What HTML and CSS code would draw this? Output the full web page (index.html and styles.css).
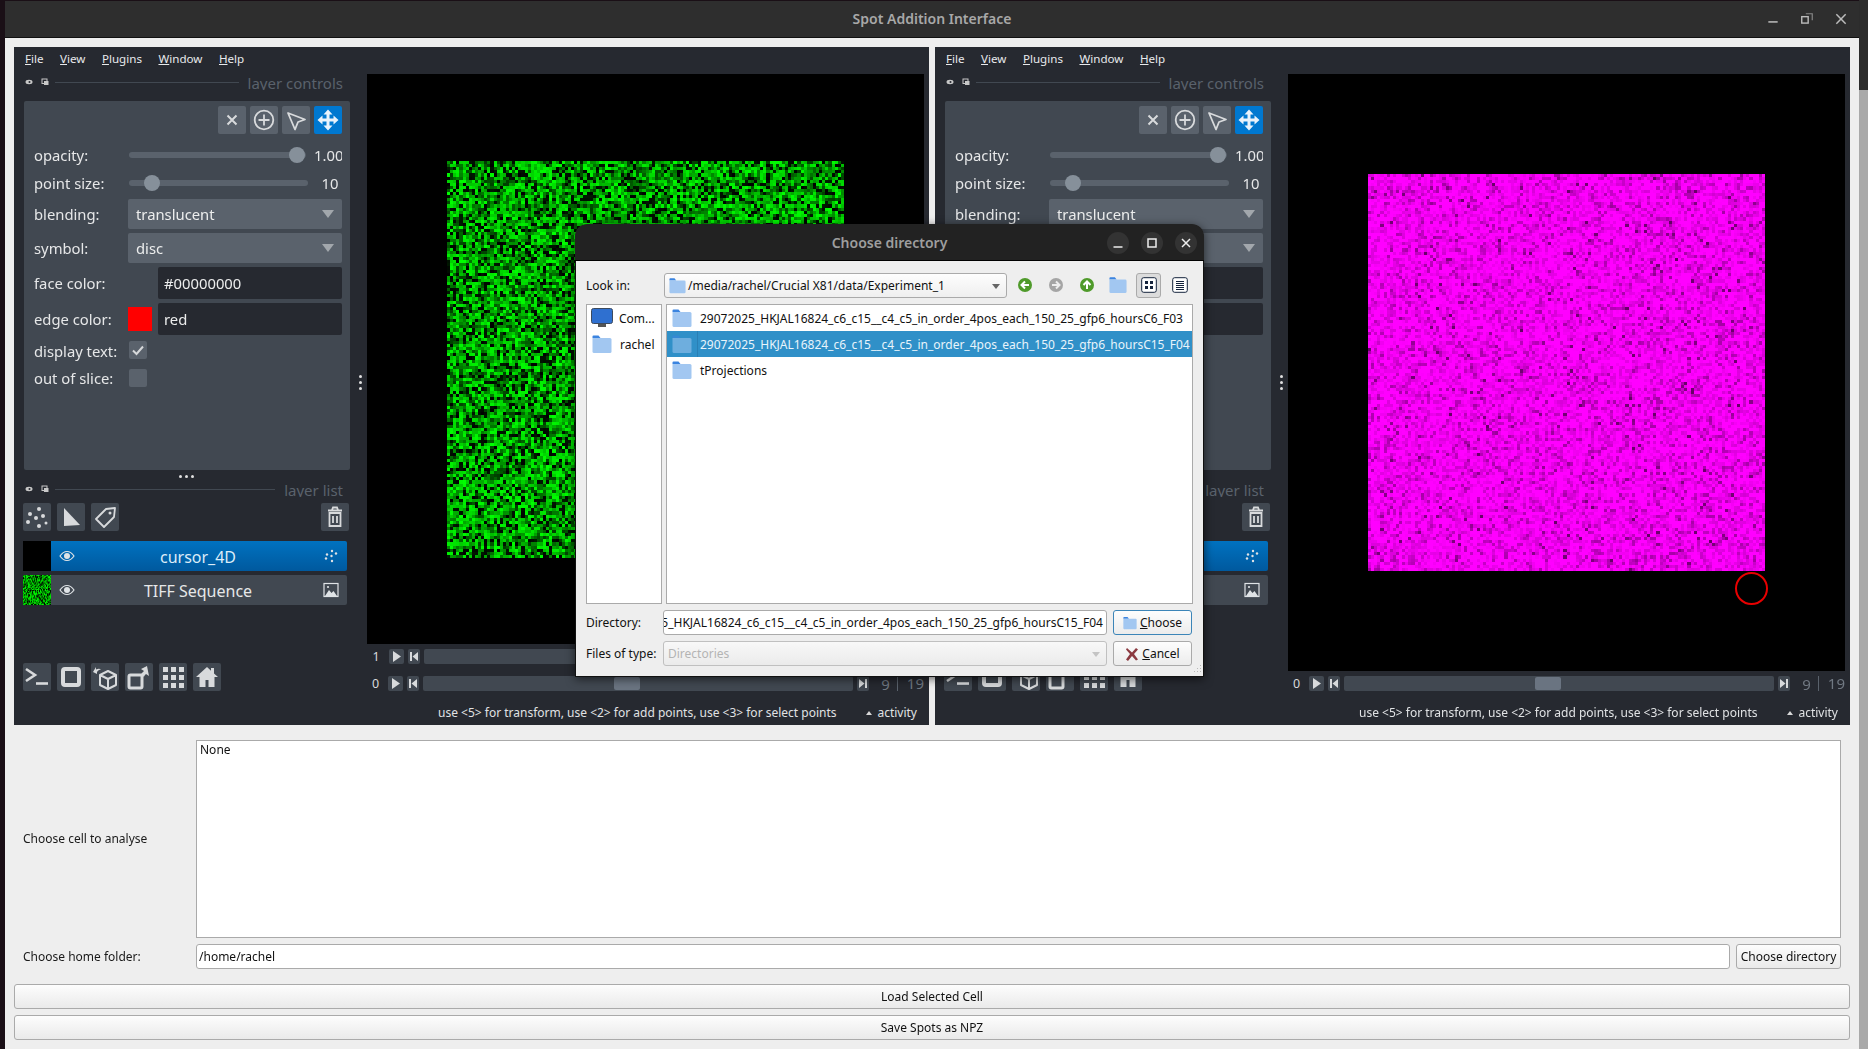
FILE: index.html
```html
<!DOCTYPE html>
<html lang="en">
<head>
<meta charset="utf-8">
<title>Spot Addition Interface</title>
<link rel="stylesheet" href="styles.css">
</head>
<body>
<svg class="sprite" width="0" height="0" aria-hidden="true">
  <symbol id="i-x" viewBox="0 0 28 28"><path d="M9.5 9.5l9 9M18.500 9.500l-9 9" fill="none" stroke="currentColor" stroke-width="2"/></symbol>
  <symbol id="i-add" viewBox="0 0 28 28"><circle cx="14" cy="14" r="9.300" fill="none" stroke="currentColor" stroke-width="1.800"/><path d="M14 8.500v11M8.500 14h11" stroke="currentColor" stroke-width="1.800"/></symbol>
  <symbol id="i-select" viewBox="0 0 28 28"><path d="M6 7l17 6.500-7 2.500-3 7.500z" fill="none" stroke="currentColor" stroke-width="1.800" stroke-linejoin="round"/></symbol>
  <symbol id="i-move" viewBox="0 0 28 28"><path d="M14 3.500l4.500 5h-3v4h4v-3l5 4.500-5 4.500v-3h-4v4h3l-4.500 5-4.500-5h3v-4h-4v3l-5-4.500 5-4.500v3h4v-4h-3z" fill="currentColor"/></symbol>
  <symbol id="i-points" viewBox="0 0 28 28"><g fill="currentColor"><circle cx="16" cy="6" r="2"/><circle cx="7" cy="11" r="2"/><circle cx="20" cy="13" r="2"/><circle cx="13" cy="15" r="2"/><circle cx="5" cy="19" r="2"/><circle cx="16" cy="23" r="2"/><circle cx="23" cy="20" r="1.500"/></g></symbol>
  <symbol id="i-shape" viewBox="0 0 28 28"><path d="M7 5l16 17-16 1z" fill="currentColor"/></symbol>
  <symbol id="i-label" viewBox="0 0 28 28"><path d="M5 16L15 6l9-1-1 9-10 10z" fill="none" stroke="currentColor" stroke-width="1.800" stroke-linejoin="round"/><circle cx="19" cy="10" r="1.500" fill="currentColor"/></symbol>
  <symbol id="i-trash" viewBox="0 0 28 28"><path d="M7 7.500h14M11 7l1-2.500h4L17 7M8.500 10h11v13h-11zM12 13v7M16 13v7" fill="none" stroke="currentColor" stroke-width="1.800"/></symbol>
  <symbol id="i-console" viewBox="0 0 28 28"><path d="M3 6l9 6-9 6" fill="none" stroke="currentColor" stroke-width="2.600"/><path d="M13 20.500h12" stroke="currentColor" stroke-width="2.600"/></symbol>
  <symbol id="i-square" viewBox="0 0 28 28"><rect x="6" y="6" width="16" height="16" rx="2" fill="none" stroke="currentColor" stroke-width="4"/></symbol>
  <symbol id="i-cube" viewBox="0 0 28 28"><path d="M9 12l8-4 8 4v10l-8 4-8-4zM9 12l8 4 8-4M17 16v10" fill="none" stroke="currentColor" stroke-width="2" stroke-linejoin="round"/><path d="M2 9l3-5v2.500c2-1 4-1 5 0-2 0-3 1-4 2.500v2z" fill="currentColor"/></symbol>
  <symbol id="i-roll" viewBox="0 0 28 28"><rect x="4" y="12" width="13" height="13" rx="1.500" fill="none" stroke="currentColor" stroke-width="3"/><path d="M22 3l2 10-3-2c-1 1-2 2-2 3l-3-3c1-1 2-2 3-3l-3-2z" fill="currentColor"/></symbol>
  <symbol id="i-grid" viewBox="0 0 28 28"><g fill="currentColor"><rect x="4" y="4" width="5" height="5"/><rect x="12" y="4" width="5" height="5"/><rect x="20" y="4" width="5" height="5"/><rect x="4" y="12" width="5" height="5"/><rect x="12" y="12" width="5" height="5"/><rect x="20" y="12" width="5" height="5"/><rect x="4" y="20" width="5" height="5"/><rect x="12" y="20" width="5" height="5"/><rect x="20" y="20" width="5" height="5"/></g></symbol>
  <symbol id="i-home" viewBox="0 0 28 28"><path d="M14 4L3 14h3.500v10h6v-7h3v7h6V14H25l-4-3.600V5h-3v2.700z" fill="currentColor"/></symbol>
  <symbol id="i-eye" viewBox="0 0 16 16"><path d="M1 8c2-3 4.500-4.500 7-4.500S13 5 15 8c-2 3-4.500 4.500-7 4.500S3 11 1 8z" fill="none" stroke="currentColor" stroke-width="1.200"/><circle cx="8" cy="8" r="3" fill="currentColor"/></symbol>
  <symbol id="i-image" viewBox="0 0 16 16"><rect x="1" y="1.500" width="14" height="13" fill="none" stroke="currentColor" stroke-width="1.200"/><path d="M2 14l4-6 2.500 3 2-2 3.500 5z" fill="currentColor"/><circle cx="5" cy="5" r="1.100" fill="currentColor"/></symbol>
  <symbol id="i-pts-sm" viewBox="0 0 16 16"><g fill="currentColor"><circle cx="9" cy="3" r="1.200"/><circle cx="13" cy="5.500" r="1.200"/><circle cx="4" cy="6.500" r="1.200"/><circle cx="8.500" cy="8" r="1.200"/><circle cx="3" cy="10.500" r="1.200"/><circle cx="9" cy="13" r="1.200"/></g></symbol>
  <symbol id="i-folder" viewBox="0 0 20 20"><path d="M0.500 2.500a1 1 0 0 1 1-1h5l2 2.500H0.500z" fill="#3b84e0"/><path d="M0.500 4h17.500a1.500 1.500 0 0 1 1.500 1.500v12a1.500 1.500 0 0 1-1.500 1.500H2a1.500 1.500 0 0 1-1.500-1.500z" fill="#a2c7f1"/></symbol>
  <symbol id="i-float" viewBox="0 0 8 8"><rect x="1" y="1" width="5" height="4.500" fill="none" stroke="currentColor"/><rect x="3" y="3" width="4.500" height="4" fill="currentColor"/></symbol>
  <symbol id="i-close" viewBox="0 0 8 8"><ellipse cx="4" cy="4" rx="3.500" ry="2.200" fill="currentColor"/><circle cx="4.500" cy="4" r="1" fill="#262930"/></symbol>
  <symbol id="i-play" viewBox="0 0 15 15"><path d="M4 2l8 5.500-8 5.500z" fill="currentColor"/></symbol>
  <symbol id="i-start" viewBox="0 0 12 15"><path d="M2 3h2v9H2zM10 3v9L4.500 7.500z" fill="currentColor"/></symbol>
  <symbol id="i-end" viewBox="0 0 12 15"><path d="M8 3h2v9H8zM2 3v9l5.500-4.500z" fill="currentColor"/></symbol>
</svg>

<div class="edge-left"></div>
<div class="window">
  <header class="titlebar">
    <span class="win-title">Spot Addition Interface</span>
    <span class="win-btns">
      <svg class="wb" viewBox="0 0 12 12"><path d="M2 8.500h8" stroke="#bbb" stroke-width="1.300"/></svg>
      <svg class="wb" viewBox="0 0 12 12"><rect x="1.500" y="4" width="5.500" height="5.500" fill="none" stroke="#bbb" stroke-width="1.200"/><path d="M5 1.500h5.500V7" fill="none" stroke="#888"/></svg>
      <svg class="wb" viewBox="0 0 12 12"><path d="M2 2l8 8M10 2l-8 8" stroke="#bbb" stroke-width="1.300"/></svg>
    </span>
  </header>

  <main class="content">
    <div class="viewers">
      <section class="napari">
        <nav class="menubar"><span><u>F</u>ile</span><span><u>V</u>iew</span><span><u>P</u>lugins</span><span><u>W</u>indow</span><span><u>H</u>elp</span></nav>
        <div class="nbody">
          <aside class="side">
            <div class="dock-title"><svg class="dk"><use href="#i-close"/></svg><svg class="dk"><use href="#i-float"/></svg><i class="dk-line"></i><span>layer controls</span></div>
            <div class="controls">
              <div class="tools">
                <button class="tb"><svg><use href="#i-x"/></svg></button>
                <button class="tb"><svg><use href="#i-add"/></svg></button>
                <button class="tb"><svg><use href="#i-select"/></svg></button>
                <button class="tb on"><svg><use href="#i-move"/></svg></button>
              </div>
              <div class="cr r-op"><label>opacity:</label><div class="slider"><b class="knob k-full"></b></div><em class="val v-op">1.00</em></div>
              <div class="cr r-pt"><label>point size:</label><div class="slider"><b class="knob k-pt"></b></div><em class="val">10</em></div>
              <div class="cr r-bl"><label>blending:</label><div class="combo">translucent<i class="arrow"></i></div></div>
              <div class="cr r-sy"><label>symbol:</label><div class="combo">disc<i class="arrow"></i></div></div>
              <div class="cr r-fc"><label>face color:</label><div class="swatch none"></div><div class="coloredit">#00000000</div></div>
              <div class="cr r-ec"><label>edge color:</label><div class="swatch"></div><div class="coloredit">red</div></div>
              <div class="cr r-dt"><label>display text:</label><div class="check"><svg viewBox="0 0 18 18"><path d="M4 9.500l3.500 3.500L14 5.500" fill="none" stroke="#d6d8da" stroke-width="2"/></svg></div></div>
              <div class="cr r-os"><label>out of slice:</label><div class="check"></div></div>
            </div>
            <div class="split-dots"><i></i><i></i><i></i></div>
            <div class="dock-title list-title"><svg class="dk"><use href="#i-close"/></svg><svg class="dk"><use href="#i-float"/></svg><i class="dk-line"></i><span>layer list</span></div>
            <div class="layer-tools">
              <button class="tb"><svg><use href="#i-points"/></svg></button>
              <button class="tb"><svg><use href="#i-shape"/></svg></button>
              <button class="tb"><svg><use href="#i-label"/></svg></button>
              <button class="tb trash"><svg><use href="#i-trash"/></svg></button>
            </div>
            <div class="layer sel"><span class="thumb"></span><span class="lbar"><svg class="eye"><use href="#i-eye"/></svg><span class="lname">cursor_4D</span><svg class="ltype"><use href="#i-pts-sm"/></svg></span></div>
            <div class="layer"><canvas class="thumb noise" data-kind="green" data-seed="7" width="28" height="28"></canvas><span class="lbar"><svg class="eye"><use href="#i-eye"/></svg><span class="lname">TIFF Sequence</span><svg class="ltype"><use href="#i-image"/></svg></span></div>
            <div class="viewer-btns">
              <button class="tb"><svg><use href="#i-console"/></svg></button>
              <button class="tb"><svg><use href="#i-square"/></svg></button>
              <button class="tb"><svg><use href="#i-cube"/></svg></button>
              <button class="tb"><svg><use href="#i-roll"/></svg></button>
              <button class="tb"><svg><use href="#i-grid"/></svg></button>
              <button class="tb"><svg><use href="#i-home"/></svg></button>
            </div>
          </aside>
          <div class="handle"><i></i><i></i><i></i></div>
          <div class="viewer">
            <div class="canvas c-green"><canvas class="noise img" data-kind="green" data-seed="11" width="128" height="128"></canvas></div>
            <div class="dims">
              <div class="dim"><span class="dnum">1</span><span class="db play"><svg><use href="#i-play"/></svg></span><span class="db step"><svg><use href="#i-start"/></svg></span><span class="track"></span></div>
              <div class="dim"><span class="dnum">0</span><span class="db play"><svg><use href="#i-play"/></svg></span><span class="db step"><svg><use href="#i-start"/></svg></span><span class="track"><b></b></span><span class="db step"><svg><use href="#i-end"/></svg></span><span class="dcount">9</span><span class="dtotal">19</span></div>
            </div>
            <div class="status"><span>use &lt;5&gt; for transform, use &lt;2&gt; for add points, use &lt;3&gt; for select points</span><span class="activity"><i></i>activity</span></div>
          </div>
        </div>
      </section>

      <section class="napari">
        <nav class="menubar"><span><u>F</u>ile</span><span><u>V</u>iew</span><span><u>P</u>lugins</span><span><u>W</u>indow</span><span><u>H</u>elp</span></nav>
        <div class="nbody">
          <aside class="side">
            <div class="dock-title"><svg class="dk"><use href="#i-close"/></svg><svg class="dk"><use href="#i-float"/></svg><i class="dk-line"></i><span>layer controls</span></div>
            <div class="controls">
              <div class="tools">
                <button class="tb"><svg><use href="#i-x"/></svg></button>
                <button class="tb"><svg><use href="#i-add"/></svg></button>
                <button class="tb"><svg><use href="#i-select"/></svg></button>
                <button class="tb on"><svg><use href="#i-move"/></svg></button>
              </div>
              <div class="cr r-op"><label>opacity:</label><div class="slider"><b class="knob k-full"></b></div><em class="val v-op">1.00</em></div>
              <div class="cr r-pt"><label>point size:</label><div class="slider"><b class="knob k-pt"></b></div><em class="val">10</em></div>
              <div class="cr r-bl"><label>blending:</label><div class="combo">translucent<i class="arrow"></i></div></div>
              <div class="cr r-sy"><label>symbol:</label><div class="combo">disc<i class="arrow"></i></div></div>
              <div class="cr r-fc"><label>face color:</label><div class="swatch none"></div><div class="coloredit">#00000000</div></div>
              <div class="cr r-ec"><label>edge color:</label><div class="swatch"></div><div class="coloredit">red</div></div>
              <div class="cr r-dt"><label>display text:</label><div class="check"><svg viewBox="0 0 18 18"><path d="M4 9.500l3.500 3.500L14 5.500" fill="none" stroke="#d6d8da" stroke-width="2"/></svg></div></div>
              <div class="cr r-os"><label>out of slice:</label><div class="check"></div></div>
            </div>
            <div class="split-dots"><i></i><i></i><i></i></div>
            <div class="dock-title list-title"><svg class="dk"><use href="#i-close"/></svg><svg class="dk"><use href="#i-float"/></svg><i class="dk-line"></i><span>layer list</span></div>
            <div class="layer-tools">
              <button class="tb"><svg><use href="#i-points"/></svg></button>
              <button class="tb"><svg><use href="#i-shape"/></svg></button>
              <button class="tb"><svg><use href="#i-label"/></svg></button>
              <button class="tb trash"><svg><use href="#i-trash"/></svg></button>
            </div>
            <div class="layer sel"><span class="thumb"></span><span class="lbar"><svg class="eye"><use href="#i-eye"/></svg><span class="lname">cursor_4D</span><svg class="ltype"><use href="#i-pts-sm"/></svg></span></div>
            <div class="layer"><canvas class="thumb noise" data-kind="magenta" data-seed="5" width="28" height="28"></canvas><span class="lbar"><svg class="eye"><use href="#i-eye"/></svg><span class="lname">TIFF Sequence</span><svg class="ltype"><use href="#i-image"/></svg></span></div>
            <div class="viewer-btns">
              <button class="tb"><svg><use href="#i-console"/></svg></button>
              <button class="tb"><svg><use href="#i-square"/></svg></button>
              <button class="tb"><svg><use href="#i-cube"/></svg></button>
              <button class="tb"><svg><use href="#i-roll"/></svg></button>
              <button class="tb"><svg><use href="#i-grid"/></svg></button>
              <button class="tb"><svg><use href="#i-home"/></svg></button>
            </div>
          </aside>
          <div class="handle"><i></i><i></i><i></i></div>
          <div class="viewer">
            <div class="canvas c-mag"><canvas class="noise img" data-kind="magenta" data-seed="23" width="128" height="128"></canvas><i class="spot"></i></div>
            <div class="dims single">
              <div class="dim"><span class="dnum">0</span><span class="db play"><svg><use href="#i-play"/></svg></span><span class="db step"><svg><use href="#i-start"/></svg></span><span class="track"><b></b></span><span class="db step"><svg><use href="#i-end"/></svg></span><span class="dcount">9</span><span class="dtotal">19</span></div>
            </div>
            <div class="status"><span>use &lt;5&gt; for transform, use &lt;2&gt; for add points, use &lt;3&gt; for select points</span><span class="activity"><i></i>activity</span></div>
          </div>
        </div>
      </section>
    </div>

    <form class="form">
      <div class="frow cellrow"><label>Choose cell to analyse</label><div class="textbox">None</div></div>
      <div class="frow homerow"><label>Choose home folder:</label><div class="lineedit">/home/rachel</div><button type="button" class="qbtn choose-dir">Choose directory</button></div>
      <button type="button" class="qbtn wide first">Load Selected Cell</button>
      <button type="button" class="qbtn wide">Save Spots as NPZ</button>
    </form>
  </main>
</div>
<div class="edge-right"><i></i></div>

<div class="dialog">
  <div class="dlg-title"><span>Choose directory</span>
    <span class="dlg-btns">
      <i><svg viewBox="0 0 22 22"><path d="M6.500 15h9" stroke="#eee" stroke-width="1.500"/></svg></i>
      <i><svg viewBox="0 0 22 22"><rect x="7" y="7" width="8" height="8" fill="none" stroke="#eee" stroke-width="1.500"/></svg></i>
      <i><svg viewBox="0 0 22 22"><path d="M7 7l8 8M15 7l-8 8" stroke="#eee" stroke-width="1.500"/></svg></i>
    </span>
  </div>
  <div class="dlg-body">
    <div class="lookrow">
      <label class="dl">Look in:</label>
      <div class="pathcombo"><svg class="ic17"><use href="#i-folder"/></svg><span>/media/rachel/Crucial X81/data/Experiment_1</span><i class="darrow"></i></div>
      <div class="navbtns">
        <span class="nav"><svg viewBox="0 0 16 16"><circle cx="8" cy="8" r="7" fill="#4f9a2a"/><path d="M12 8H5M8 4.500L4.500 8 8 11.500" fill="none" stroke="#fff" stroke-width="2"/></svg></span>
        <span class="nav"><svg viewBox="0 0 16 16"><circle cx="8" cy="8" r="7" fill="#a5a5a5"/><path d="M4 8h7M8 4.500L11.500 8 8 11.500" fill="none" stroke="#eee" stroke-width="2"/></svg></span>
        <span class="nav"><svg viewBox="0 0 16 16"><circle cx="8" cy="8" r="7" fill="#4f9a2a"/><path d="M8 12V5M4.500 8L8 4.500 11.500 8" fill="none" stroke="#fff" stroke-width="2"/></svg></span>
        <span class="nav newdir"><svg><use href="#i-folder"/></svg></span>
        <span class="nav pressed"><svg viewBox="0 0 16 16"><rect x="0.700" y="0.700" width="14.600" height="14.600" rx="2" fill="#fff" stroke="#14233c"/><path d="M4 4h3v3H4zM9 4h3v3H9zM4 9h3v3H4zM9 9h3v3H9z" fill="#14233c"/></svg></span>
        <span class="nav"><svg viewBox="0 0 16 16"><rect x="0.700" y="0.700" width="14.600" height="14.600" rx="2" fill="#fff" stroke="#14233c"/><path d="M4 4.500h8M4 6.500h8M4 8.500h8M4 10.500h8M4 12.500h8" stroke="#14233c"/></svg></span>
      </div>
    </div>
    <div class="panes">
      <div class="sidebar">
        <div class="sb-row"><svg class="ic-mon" viewBox="0 0 22 20"><rect x="0.500" y="0.500" width="21" height="15" rx="2" fill="#2f70d0" stroke="#3c4a5e"/><rect x="7" y="16" width="8" height="3" fill="#555"/></svg><span>Com...</span></div>
        <div class="sb-row"><svg class="ic20"><use href="#i-folder"/></svg><span>rachel</span></div>
      </div>
      <div class="files">
        <div class="frow-f"><svg class="ic20"><use href="#i-folder"/></svg><span>29072025_HKJAL16824_c6_c15__c4_c5_in_order_4pos_each_150_25_gfp6_hoursC6_F03</span></div>
        <div class="frow-f active"><svg class="ic20"><use href="#i-folder"/></svg><span>29072025_HKJAL16824_c6_c15__c4_c5_in_order_4pos_each_150_25_gfp6_hoursC15_F04</span></div>
        <div class="frow-f"><svg class="ic20"><use href="#i-folder"/></svg><span>tProjections</span></div>
      </div>
    </div>
    <div class="dirrow">
      <label class="dl">Directory:</label>
      <div class="dirinput"><span>29072025_HKJAL16824_c6_c15__c4_c5_in_order_4pos_each_150_25_gfp6_hoursC15_F04</span></div>
      <button type="button" class="dbtn default"><svg class="ic14"><use href="#i-folder"/></svg><span><u>C</u>hoose</span></button>
    </div>
    <div class="dirrow typerow">
      <label class="dl">Files of type:</label>
      <div class="typecombo"><span>Directories</span><i class="darrow dim-a"></i></div>
      <button type="button" class="dbtn"><svg class="ic14" viewBox="0 0 14 14"><path d="M2 1l5 4.500L11 1l2 1.500L9 7l4 5.500-2 1L7 9l-4 5-2-1.500L5 7 1 2.500z" fill="#8c3a40"/></svg><span><u>C</u>ancel</span></button>
    </div>
    <svg class="grip" viewBox="0 0 10 10"><g fill="#b8b8b8"><rect x="8" y="0" width="1" height="1"/><rect x="5" y="3" width="1" height="1"/><rect x="8" y="3" width="1" height="1"/><rect x="2" y="6" width="1" height="1"/><rect x="5" y="6" width="1" height="1"/><rect x="8" y="6" width="1" height="1"/></g></svg>
  </div>
</div>
<script src="script.js"></script>
</body>
</html>
```
FILE: styles.css
```css
*{box-sizing:border-box}
html,body{margin:0;height:100%}
body{width:1868px;height:1049px;overflow:hidden;display:flex;background:#1a0f16;font-family:"Noto Sans",sans-serif;position:relative}
.sprite{position:absolute}
.edge-left{width:5px;background:#1a0f16}
.edge-right{width:9px;background:#2c2c2c;padding-top:90px}
.edge-right i{display:block;height:959px;background:#a9a9a9}
.window{width:1854px;display:flex;flex-direction:column}
.titlebar{height:37px;margin-top:1px;padding-bottom:2px;background:#2e2e2e;border-bottom:1px solid #111;display:flex;align-items:center;justify-content:center;position:relative}
.win-title{color:#a8a8a8;font-size:14px;font-weight:600}
.win-btns{position:absolute;right:0;top:0;height:36px;display:flex;align-items:center;gap:20px;padding-right:11px}
.wb{width:14px;height:14px}
.content{flex:1;background:#eee;padding:9px 9px 0}
.viewers{display:flex;gap:6px}
.napari{width:915px;height:678px;background:#262930;color:#e6e7e8;display:flex;flex-direction:column}
.menubar{height:27px;display:flex;align-items:center;gap:16.500px;padding:0 0 3px 11px;font-size:11.600px;color:#e8eaec}
.menubar span{line-height:16px}
.nbody{flex:1;display:flex;min-height:0}
.side{width:339px;padding-left:9px;flex:none}
.dock-title{height:27px;width:320px;display:flex;align-items:flex-start;overflow:hidden;color:#5a626c;font-size:15px}
.dock-title span{line-height:18px;margin-left:9px;height:16px;overflow:hidden;white-space:nowrap}
.dk{width:8px;height:8px;color:#c8c8c8;margin:4px 6px 0 2px;flex:none}
.dk-line{flex:1;height:1px;background:#414851;margin-top:8px}
.controls{width:326px;height:369px;margin-left:1px;background:#414851;border-radius:2px;padding:5px 8px 0 10px;font-size:14.800px}
.tools{display:flex;justify-content:flex-end;gap:4px;height:28px}
.tb{width:28px;height:28px;padding:0;border:0;border-radius:2px;background:#414851;color:#d8dadc;display:block;flex:none}
.tb svg{width:28px;height:28px;display:block}
.controls .tb{background:#5a626c}
.controls .tb.on{background:#0078d0;color:#e8f2fb}
.cr{display:flex;align-items:center;position:relative}
.cr label{width:94px;flex:none;color:#e6e7e8}
.r-op{height:30px;margin-top:6px}
.r-pt{height:26px}
.r-bl{height:30px;margin-top:3px}
.r-sy{height:30px;margin-top:4px}
.r-fc{height:32px;margin-top:4px}
.r-ec{height:32px;margin-top:4px}
.r-dt{height:26px;margin-top:2px}
.r-dt label{padding-top:2px}
.r-os{height:26px;margin-top:2px}
.slider{width:179px;height:6px;background:#5a626c;border-radius:3px;position:relative;margin-left:1px;flex:none}
.knob{position:absolute;top:-5px;width:16px;height:16px;border-radius:50%;background:#86909a}
.k-full{left:160px}
.k-pt{left:15px}
.val{font-style:normal;flex:1;text-align:center;padding-left:10px;white-space:nowrap;overflow:hidden}
.r-op .slider{width:177px}
.val.v-op{overflow:hidden;width:28px;flex:none;margin-left:8px;padding:0;text-align:left}
.combo{width:214px;height:30px;background:#5a626c;border-radius:2px;display:flex;align-items:center;justify-content:space-between;padding:0 8px;color:#eceded}
.arrow{width:0;height:0;border:6px solid transparent;border-top:8px solid #a2a7ac;border-bottom:0}
.swatch{width:24px;height:24px;background:#f00;flex:none}
.swatch.none{background:transparent}
.coloredit{width:184px;height:32px;margin-left:6px;background:#262930;border-radius:2px;display:flex;align-items:center;padding-left:6px;color:#eceded}
.check{width:18px;height:18px;margin-left:1px;background:#5a626c;border-radius:2px}
.check svg{width:18px;height:18px;display:block}
.split-dots{height:13px;width:326px;display:flex;justify-content:center;align-items:center;gap:3px}
.split-dots i,.handle i{width:3px;height:3px;border-radius:50%;background:#e0e0e0;display:block}
.list-title{height:20px}
.list-title span{line-height:14px;height:14px}
.list-title .dk{margin-top:2px}
.list-title .dk-line{margin-top:6px}
.layer-tools{display:flex;gap:6px;height:28px;width:326px}
.trash{margin-left:auto}
.layer{display:flex;height:30px;width:324px;margin-top:4px}
.layer-tools + .layer{margin-top:10px}
.thumb{width:28px;height:30px;background:#000;display:block;flex:none}
.lbar{flex:1;background:#414851;border-radius:0 2px 2px 0;display:flex;align-items:center;padding:0 8px;font-size:16px;color:#e6e7e8}
.sel .lbar{background:linear-gradient(#0072c0,#00599e);color:#dcecf8}
.eye{width:16px;height:16px;color:#dfe3e6;flex:none}
.ltype{width:16px;height:16px;color:#dfe3e6;flex:none}
.lname{flex:1;text-align:center;padding-right:2px;padding-top:1px}
.viewer-btns{display:flex;gap:6px;margin-top:58px}
.handle{width:14px;flex:none;display:flex;flex-direction:column;align-items:center;justify-content:center;gap:3px;padding-bottom:34px}
.viewer{width:562px;display:flex;flex-direction:column}
.canvas{width:557px;background:#000;position:relative}
.c-green{height:570px}
.c-mag{height:597px}
.img{position:absolute;width:397px;height:397px;image-rendering:pixelated}
.c-green .img{left:80px;top:87px}
.c-mag .img{left:80px;top:100px}
.spot{position:absolute;left:447px;top:498px;width:33px;height:33px;border:2px solid #e80000;border-radius:50%}
.dims{height:54px;display:flex;flex-direction:column;padding-top:5px;gap:12px;font-size:13px}
.dims.single{height:27px}
.dim{height:15px;display:flex;align-items:center;gap:4px;width:557px;color:#d8dadc}
.dnum{width:18px;text-align:center;font-size:12.500px}
.db{height:15px;background:#414851;border-radius:2px;display:block;flex:none}
.db svg{display:block;height:15px;width:100%}
.play{width:15px}
.step{width:12px}
.track{width:430px;flex:none;height:15px;background:#414851;border-radius:2px;position:relative;display:block}
.track b{position:absolute;left:191px;top:1px;width:26px;height:13px;background:#6a7481;border-radius:2px}
.dcount{width:17px;text-align:right;color:#707882;font-size:15px}
.dtotal{padding-left:9px;border-left:1px solid #5a626c;color:#707882;font-size:15px;line-height:15px;margin-left:3px}
.status{height:27px;padding:2px 0 0 71px;font-size:12px;color:#e0e2e4;display:flex;justify-content:space-between;width:550px;align-items:center;white-space:nowrap}
.activity{display:flex;align-items:center;gap:5px}
.activity i{width:0;height:0;border:3px solid transparent;border-bottom:4px solid #d8d8d8;border-top:0}
.form{font-size:12px;color:#111}
.frow{display:flex;align-items:center}
.frow label{width:182px;padding-left:9px;flex:none;color:#1a1a1a}
.cellrow{margin-top:15px;height:198px}
.cellrow label{padding-bottom:2px}
.cellrow .textbox{height:198px;width:1645px}
.textbox{background:#fff;border:1px solid #aaa;padding:1px 3px;line-height:16px;color:#111}
.homerow{margin-top:6px;height:25px;gap:6px}
.homerow label{margin-right:-6px}
.lineedit{width:1534px;height:25px;background:#fff;border:1px solid #aaa;border-radius:3px;display:flex;align-items:center;padding-left:2px}
.qbtn{height:25px;border:1px solid #aaa;border-radius:3px;background:linear-gradient(#fdfdfd,#eaeaea);font:12px "Noto Sans",sans-serif;color:#111;padding:0;display:block}
.choose-dir{width:105px}
.wide{width:1836px;margin-top:6px}
.wide.first{margin-top:15px}
.dialog{position:absolute;left:575px;top:224px;width:629px;height:453px;box-shadow:0 2px 10px rgba(0,0,0,.6);border-radius:12px 12px 0 0;display:flex;flex-direction:column;z-index:5;font-size:12px;color:#111}
.dlg-title{height:37px;background:#222;border-radius:12px 12px 0 0;border-bottom:1px solid #000;display:flex;align-items:center;justify-content:center;position:relative;color:#9e9e9e;font-size:14px;font-weight:600}
.dlg-btns{position:absolute;right:7px;top:8px;display:flex;gap:12px}
.dlg-btns i{display:block;width:22px;height:22px;border-radius:50%;background:#333}
.dlg-btns svg{display:block;width:22px;height:22px}
.dlg-body{flex:1;background:#eee;padding:12px 10px 0;border:1px solid #111;border-top:0;position:relative}
.lookrow{display:flex;align-items:center;height:25px}
.dl{width:78px;flex:none}
.pathcombo{width:343px;height:25px;background:linear-gradient(#fdfdfd,#efefef);border:1px solid #aaa;border-radius:3px;display:flex;align-items:center;padding-left:4px;gap:2px;position:relative}
.ic20{width:20px;height:20px;flex:none;display:block}
.ic17{width:17px;height:17px;flex:none;display:block}
.ic14{width:14px;height:14px;display:block;flex:none}
.darrow{position:absolute;right:6px;top:10px;width:0;height:0;border:4px solid transparent;border-top:5px solid #666;border-bottom:0}
.dim-a{border-top-color:#c4c4c4}
.navbtns{display:flex;margin-left:5px;width:180px;justify-content:space-between;align-items:center}
.nav{width:25px;height:25px;display:flex;align-items:center;justify-content:center;border-radius:3px;flex:none;padding-bottom:1px}
.nav svg{width:16px;height:16px;display:block}
.nav.newdir svg{width:18px;height:18px}
.pressed{background:#dcdcdc;border:1px solid #aaa}
.panes{display:flex;gap:4px;height:300px;margin-top:6px}
.sidebar{width:76px;background:#fff;border:1px solid #aaa;padding:0 4px}
.sb-row{height:26px;display:flex;align-items:center;gap:6px}
.ic-mon{width:22px;height:20px;flex:none}
.sb-row .ic20{margin:0 2px 0 1px}
.files{width:527px;background:#fff;border:1px solid #aaa}
.frow-f{height:26px;display:flex;align-items:center;gap:8px;padding-left:5px;white-space:nowrap}
.active{background:#3090c8;color:#e8f4fb}
.active .ic20{opacity:.55}
.active span{border-left:1px solid #2a7fb5;padding-left:2px;margin-left:-3px;align-self:stretch;display:flex;align-items:center}
.dirrow{display:flex;align-items:center;height:25px;margin-top:6px;gap:6px}
.dirrow .dl{width:71px}
.dirinput{width:444px;height:25px;background:#fff;border:1px solid #aaa;border-radius:3px;display:flex;align-items:center;justify-content:flex-end;overflow:hidden;white-space:nowrap;padding-right:3px}
.typecombo{width:444px;height:25px;background:linear-gradient(#f8f8f8,#ebebeb);border:1px solid #c0c0c0;border-radius:3px;display:flex;align-items:center;padding-left:4px;color:#b4b4b4;position:relative}
.dbtn{width:79px;height:25px;border:1px solid #aaa;border-radius:3px;background:linear-gradient(#fdfdfd,#ececec);font:12px "Noto Sans",sans-serif;color:#111;display:flex;align-items:center;justify-content:center;gap:3px;padding:0}
.dbtn.default{border-color:#3c85b8}
.grip{position:absolute;right:1px;bottom:1px;width:10px;height:10px}
```
FILE: script.js
```js
// Fills each noise canvas with a seeded random field, standing in for the microscope images.
document.querySelectorAll('.noise').forEach(function (c) {
  var ctx = c.getContext('2d');
  var img = ctx.createImageData(c.width, c.height);
  var s = Number(c.dataset.seed) * 2654435761 % 4294967296;
  function rnd() {
    s = (s * 1664525 + 1013904223) % 4294967296;
    return s / 4294967296;
  }
  var magenta = c.dataset.kind === 'magenta';
  for (var i = 0; i < img.data.length; i += 4) {
    var r = rnd(), r2 = rnd(), v;
    if (magenta) {
      v = r < 0.4 ? 255 : r < 0.82 ? 215 + r2 * 40 : r < 0.98 ? 165 + r2 * 50 : 100 + r2 * 60;
      img.data[i] = v; img.data[i + 1] = 0; img.data[i + 2] = v;
    } else {
      v = r < 0.2 ? r2 * 25 : r < 0.42 ? 60 + r2 * 70 : r < 0.68 ? 130 + r2 * 70 : 200 + r2 * 55;
      img.data[i] = 0; img.data[i + 1] = v; img.data[i + 2] = 0;
    }
    img.data[i + 3] = 255;
  }
  ctx.putImageData(img, 0, 0);
});
```
